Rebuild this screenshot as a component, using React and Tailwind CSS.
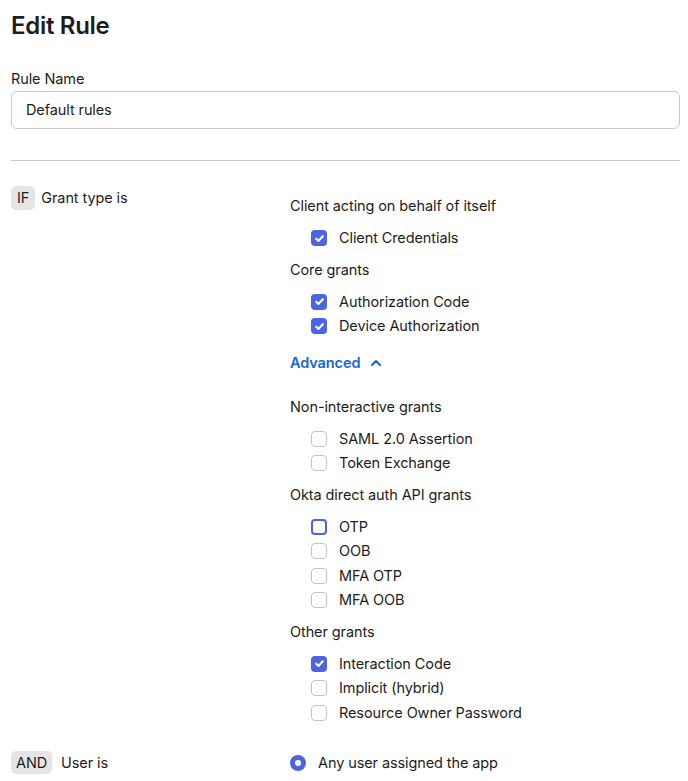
import { ChevronUp } from 'lucide-react';

const Checkbox = ({ checked, focused }) => {
    if (checked) {
        return (
            <span className="w-4 h-4 rounded-[4px] bg-[#4c64e1] flex items-center justify-center shrink-0">
                <svg width="11" height="11" viewBox="0 0 10 10" fill="none">
                    <path d="M2 5.2 L4.1 7.2 L8 2.9" stroke="white" strokeWidth="1.9" strokeLinecap="round" strokeLinejoin="round" />
                </svg>
            </span>
        );
    }
    return (
        <span
            className={`w-4 h-4 rounded-[4px] bg-white shrink-0 ${focused ? 'border-2 border-[#4c64e1]' : 'border-[1.5px] border-[#c4c4c8]'}`}
        ></span>
    );
};

const Group = ({ title, items, className = '' }) => (
    <div className={className}>
        <div className="h-6 leading-6">{title}</div>
        <div className="mt-2 pl-[21px]">
            {items.map((item) => (
                <div key={item.label} className="h-[24.5px] flex items-center gap-3">
                    <Checkbox checked={item.checked} focused={item.focused} />
                    <span>{item.label}</span>
                </div>
            ))}
        </div>
    </div>
);

const App = () => {
    return (
        <div className="min-h-screen bg-white text-[#1d1d21] text-[14.5px] tracking-[-0.1px] font-['Inter','Noto_Sans',sans-serif] px-[11px] pt-[10px] pr-2 overflow-hidden h-[781px]">
            <h1 className="text-[24px] leading-8 font-semibold tracking-[-0.3px]">Edit Rule</h1>

            <label className="block mt-[27px] leading-5">Rule Name</label>
            <div className="mt-[2px] h-[38px] border border-[#c9c9ce] rounded-[6px] flex items-center pl-[14px]">
                Default rules
            </div>

            <div className="mt-[31px] h-px bg-[#c9c9ce]"></div>

            {/* IF row */}
            <div className="mt-[25px] flex">
                <div className="w-[279px] shrink-0 flex items-start gap-[6px]">
                    <span className="h-6 px-[6px] rounded-[5px] bg-[#e5e5e8] flex items-center">IF</span>
                    <span className="leading-6">Grant type is</span>
                </div>
                <div className="pt-[8px] flex-1">
                    <Group title="Client acting on behalf of itself" items={[{ label: 'Client Credentials', checked: true }]} />
                    <Group
                        className="mt-[7px]"
                        title="Core grants"
                        items={[
                            { label: 'Authorization Code', checked: true },
                            { label: 'Device Authorization', checked: true },
                        ]}
                    />

                    <button className="mt-[12px] h-6 flex items-center gap-[8px] text-[#1662dd] font-semibold">
                        Advanced
                        <ChevronUp size={16} strokeWidth={3} />
                    </button>

                    <Group
                        className="mt-5"
                        title="Non-interactive grants"
                        items={[
                            { label: 'SAML 2.0 Assertion' },
                            { label: 'Token Exchange' },
                        ]}
                    />
                    <Group
                        className="mt-[7px]"
                        title="Okta direct auth API grants"
                        items={[
                            { label: 'OTP', focused: true },
                            { label: 'OOB' },
                            { label: 'MFA OTP' },
                            { label: 'MFA OOB' },
                        ]}
                    />
                    <Group
                        className="mt-[7px]"
                        title="Other grants"
                        items={[
                            { label: 'Interaction Code', checked: true },
                            { label: 'Implicit (hybrid)' },
                            { label: 'Resource Owner Password' },
                        ]}
                    />
                </div>
            </div>

            {/* AND row */}
            <div className="mt-[26px] flex">
                <div className="w-[279px] shrink-0 flex items-start gap-[9px]">
                    <span className="h-[23px] px-[5px] rounded-[5px] bg-[#e5e5e8] flex items-center">AND</span>
                    <span className="leading-[23px]">User is</span>
                </div>
                <div className="flex-1">
                    <div className="h-[23px] flex items-center gap-3">
                        <span className="w-4 h-4 rounded-full bg-[#4c64e1] flex items-center justify-center shrink-0">
                            <span className="w-[6px] h-[6px] rounded-full bg-white"></span>
                        </span>
                        <span>Any user assigned the app</span>
                    </div>
                    <div className="mt-[3px] h-[23px] flex items-center gap-3 text-[#6e6e78]">
                        <span className="w-4 h-4 rounded-full border-[1.5px] border-[#c8c8cc] shrink-0"></span>
                        <span>Specific users, groups or network zones</span>
                    </div>
                </div>
            </div>
        </div>
    );
};

export default App;
